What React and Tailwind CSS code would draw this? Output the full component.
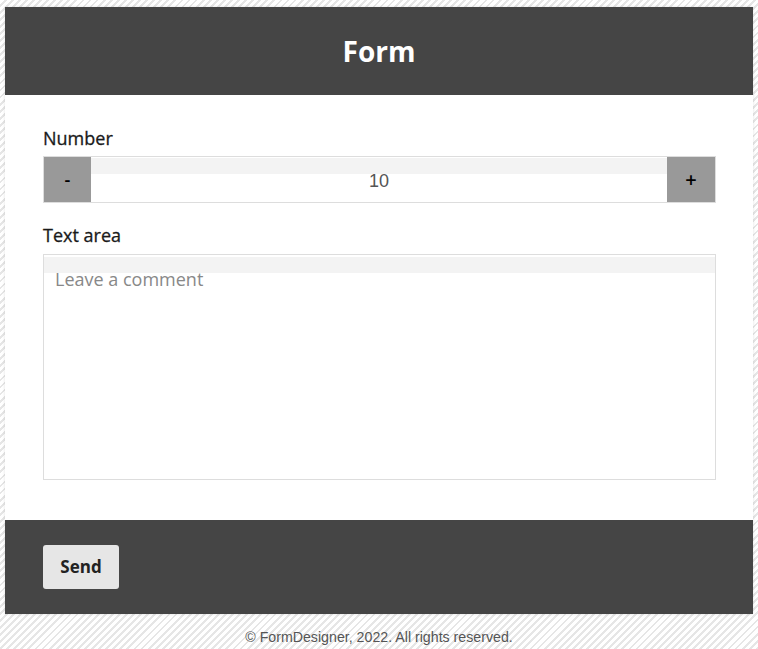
export default function App() {
  return (
    <div className="min-h-[649px] w-full bg-[repeating-linear-gradient(135deg,#ffffff_0px,#ffffff_3px,#e6e6e6_3px,#e6e6e6_5px)] px-[5px] pt-[7px] font-['Lato',sans-serif]">
      <div className="bg-white shadow-[0_0_3px_rgba(0,0,0,0.12)]">
        <div className="h-[88px] bg-[#454545] flex items-center justify-center">
          <h1 className="text-white text-[28px] font-bold font-['Open_Sans',sans-serif] leading-none">Form</h1>
        </div>
        <div className="pl-[38px] pr-[37px] pt-[32px] pb-[40px] font-['Open_Sans',sans-serif]">
          <label className="block text-[18px] text-[#1a1a1a] [-webkit-text-stroke:0.3px_#1a1a1a] leading-[22px] mb-[7px]">Number</label>
          <div className="flex h-[47px] border border-[#ddd]">
            <button className="w-[47px] bg-[#999] text-black text-[18px] font-semibold">-</button>
            <div className="flex-1 relative bg-white">
              <div className="absolute left-0 right-0 top-[1px] h-[16px] bg-[#f3f3f3]"></div>
              <div className="relative h-full flex items-center justify-center pt-[3px] text-[18px] text-[#555] font-['Liberation_Sans',sans-serif]">10</div>
            </div>
            <button className="w-[48px] bg-[#999] text-black text-[20px] font-semibold">+</button>
          </div>
          <label className="block text-[18px] text-[#1a1a1a] [-webkit-text-stroke:0.3px_#1a1a1a] leading-[22px] mt-[21px] mb-[8px]">Text area</label>
          <div className="relative h-[226px] border border-[#ddd] bg-white">
            <div className="absolute left-0 right-0 top-[2px] h-[16px] bg-[#f3f3f3]"></div>
            <div className="relative pl-[11px] pt-[13px] text-[18px] text-[#888] leading-[22px]">Leave a comment</div>
          </div>
        </div>
        <div className="h-[94px] bg-[#454545] flex items-center px-[38px]">
          <button className="w-[76px] h-[44px] bg-[#e6e6e6] rounded-[3px] text-[17px] font-bold text-[#222] font-['Open_Sans',sans-serif]">Send</button>
        </div>
      </div>
      <div className="h-[35px] flex items-center justify-center pt-[12px] text-[14.2px] text-[#555] font-['Liberation_Sans',sans-serif]">
        © FormDesigner, 2022. All rights reserved.
      </div>
    </div>
  );
}
